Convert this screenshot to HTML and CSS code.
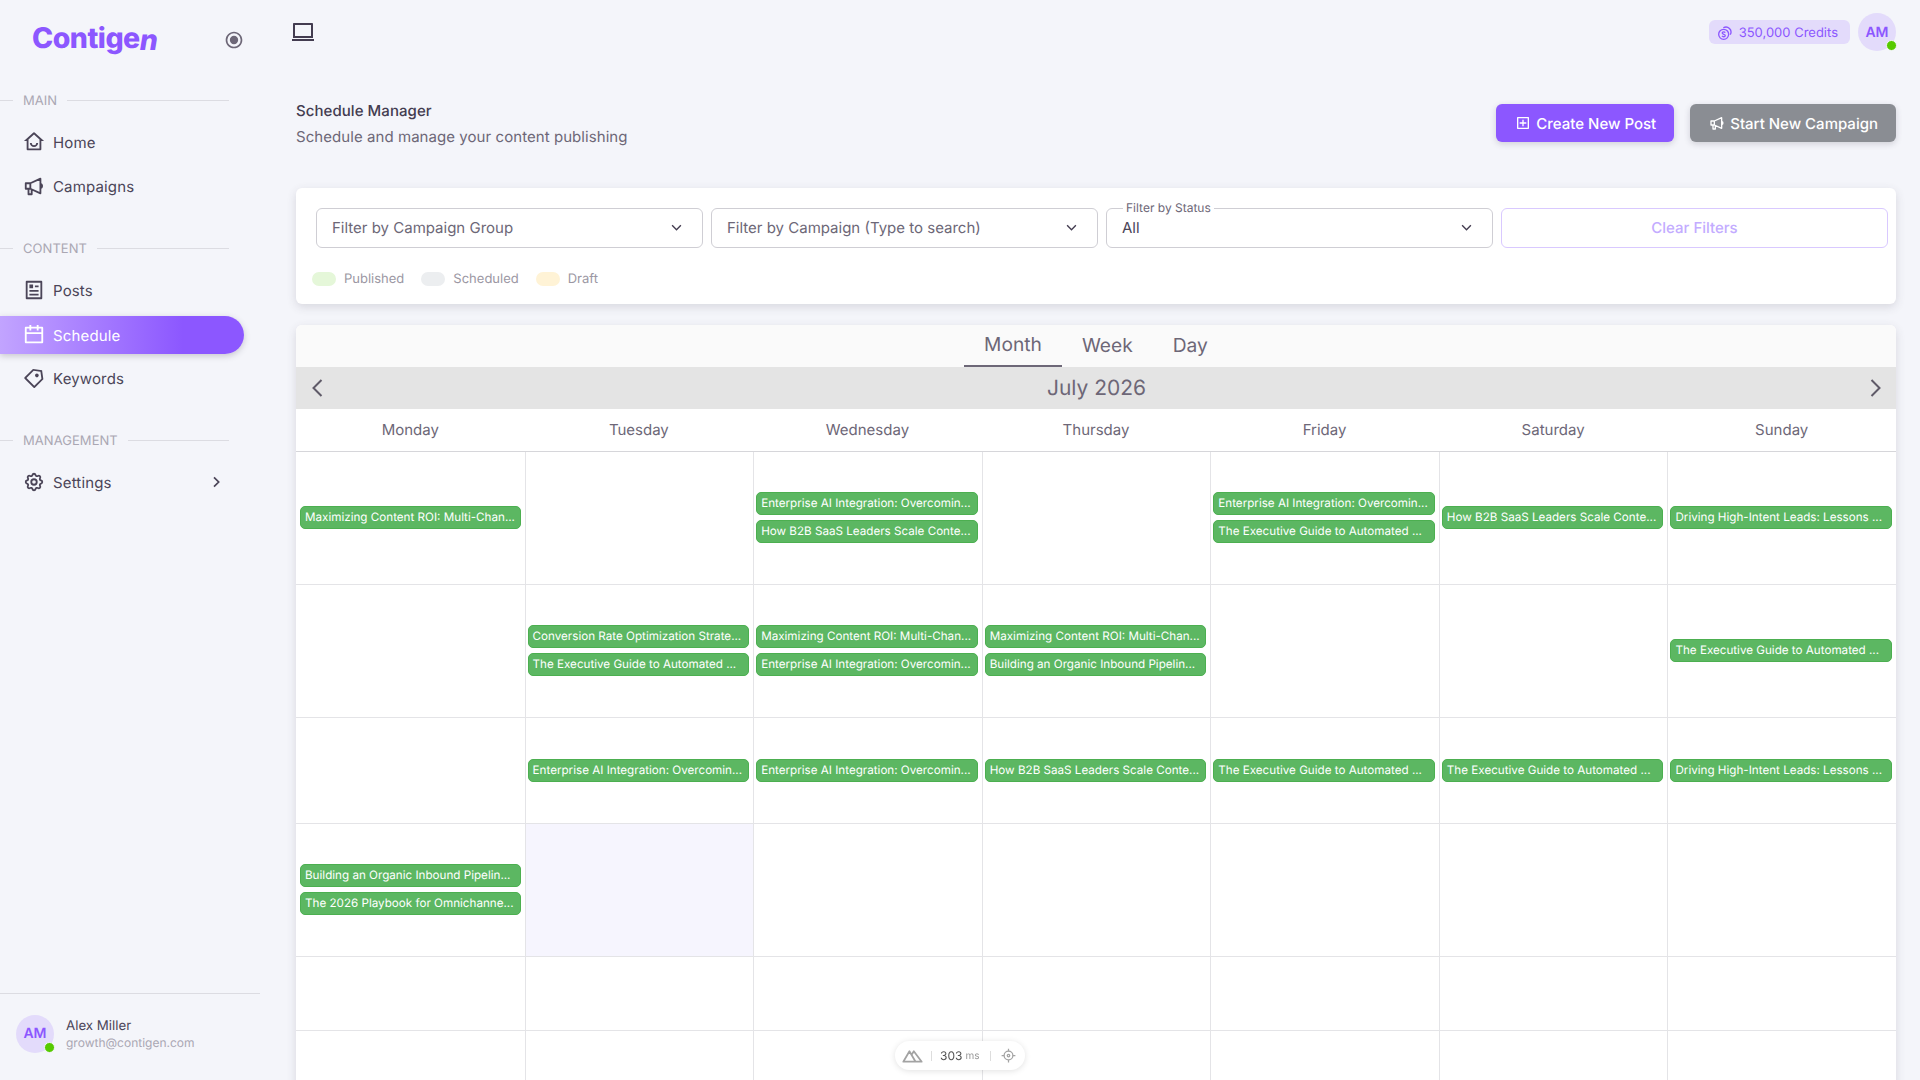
FILE: index.html
```html
<!DOCTYPE html>
<html lang="en">
<head>
  <meta charset="UTF-8">
  <meta name="viewport" content="width=device-width, initial-scale=1.0">
  <title>Schedule Manager</title>
  <link rel="stylesheet" href="styles.css">
</head>
<body>
<div class="app">
  <!-- Sidebar -->
  <aside class="sidebar">
    <div class="brand">
      <span class="logo">Contige<span class="logo-n">n</span></span>
      <svg class="pin" viewBox="0 0 24 24"><path d="M12 22C6.477 22 2 17.523 2 12S6.477 2 12 2s10 4.477 10 10-4.477 10-10 10zm0-2a8 8 0 1 0 0-16 8 8 0 0 0 0 16zm0-3a5 5 0 1 1 0-10 5 5 0 0 1 0 10z"/></svg>
    </div>

    <div class="section-label"><span>MAIN</span></div>
    <a class="nav-item">
      <svg class="nav-icon" viewBox="0 0 24 24"><path d="M6 19h12V9.157l-6-5.454-6 5.454V19zm13 2H5a1 1 0 0 1-1-1v-9H1l10.327-9.388a1 1 0 0 1 1.346 0L23 11h-3v9a1 1 0 0 1-1 1zM7.5 13h2a2.5 2.5 0 1 0 5 0h2a4.5 4.5 0 1 1-9 0z"/></svg>
      Home
    </a>
    <a class="nav-item">
      <svg class="nav-icon stroke" viewBox="0 0 24 24"><path d="M3 9h5l11-5v16L8 15H3zM8 9v6M6 15v6h3.5v-5M19 9.5a2.6 2.6 0 0 1 0 5"/></svg>
      Campaigns
    </a>

    <div class="section-label gap"><span>CONTENT</span></div>
    <a class="nav-item">
      <svg class="nav-icon" viewBox="0 0 24 24"><path d="M20 22H4a1 1 0 0 1-1-1V3a1 1 0 0 1 1-1h16a1 1 0 0 1 1 1v18a1 1 0 0 1-1 1zm-1-2V4H5v16h14zM7 6h4v4H7V6zm0 6h10v2H7v-2zm0 4h10v2H7v-2zm6-9h4v2h-4V7z"/></svg>
      Posts
    </a>
    <a class="nav-item active">
      <svg class="nav-icon" viewBox="0 0 24 24"><path d="M17 3h4a1 1 0 0 1 1 1v16a1 1 0 0 1-1 1H3a1 1 0 0 1-1-1V4a1 1 0 0 1 1-1h4V1h2v2h6V1h2v2zm-2 2H9v2H7V5H4v4h16V5h-3v2h-2V5zm5 6H4v8h16v-8z"/></svg>
      Schedule
    </a>
    <a class="nav-item">
      <svg class="nav-icon" viewBox="0 0 24 24"><path d="M10.9 2.1l9.899 1.415 1.414 9.9-9.192 9.192a1 1 0 0 1-1.414 0l-9.9-9.9a1 1 0 0 1 0-1.414L10.9 2.1zm.707 2.122L3.828 12l8.486 8.485 7.778-7.778-1.06-7.425-7.425-1.06zm2.12 6.364a2 2 0 1 1 2.83-2.829 2 2 0 0 1-2.83 2.829z"/></svg>
      Keywords
    </a>

    <div class="section-label gap"><span>MANAGEMENT</span></div>
    <a class="nav-item">
      <svg class="nav-icon stroke" viewBox="0 0 24 24"><path d="M10.325 4.317c.426 -1.756 2.924 -1.756 3.35 0a1.724 1.724 0 0 0 2.573 1.066c1.543 -.94 3.31 .826 2.37 2.37a1.724 1.724 0 0 0 1.065 2.572c1.756 .426 1.756 2.924 0 3.35a1.724 1.724 0 0 0 -1.066 2.573c.94 1.543 -.826 3.31 -2.37 2.37a1.724 1.724 0 0 0 -2.572 1.065c-.426 1.756 -2.924 1.756 -3.35 0a1.724 1.724 0 0 0 -2.573 -1.066c-1.543 .94 -3.31 -.826 -2.37 -2.37a1.724 1.724 0 0 0 -1.065 -2.572c-1.756 -.426 -1.756 -2.924 0 -3.35a1.724 1.724 0 0 0 1.066 -2.573c-.94 -1.543 .826 -3.31 2.37 -2.37c1 .608 2.296 .07 2.572 -1.065z"/><circle cx="12" cy="12" r="3"/></svg>
      Settings
      <svg class="nav-arrow" viewBox="0 0 24 24"><path d="M9 5l7 7-7 7"/></svg>
    </a>

    <div class="user-box">
      <div class="avatar">AM<span class="online"></span></div>
      <div class="user-text">
        <div class="user-name">Alex Miller</div>
        <div class="user-mail">growth@contigen.com</div>
      </div>
    </div>
  </aside>

  <!-- Main content -->
  <main class="main">
    <div class="topbar">
      <svg class="laptop" viewBox="0 0 24 24"><path d="M4 5v11h16V5H4zm-2-.993C2 3.451 2.455 3 2.992 3h18.016c.548 0 .992.449.992 1.007V18H2V4.007zM1 19h22v2H1v-2z"/></svg>
      <div class="top-right">
        <div class="credits">
          <svg class="coin" viewBox="0 0 24 24"><circle cx="10" cy="14" r="7.5"/><path d="M9.5 4.2a7.5 7.5 0 0 1 10.3 10.3M12.4 11.4c-.6-.8-1.4-1.1-2.4-1.1-1.3 0-2.2.7-2.2 1.8 0 2.4 4.6 1.3 4.6 3.7 0 1.1-1 1.8-2.4 1.8-1 0-1.9-.4-2.5-1.2"/></svg>
          350,000 Credits
        </div>
        <div class="avatar">AM<span class="online"></span></div>
      </div>
    </div>

    <div class="page-head">
      <div class="page-title">
        <h1>Schedule Manager</h1>
        <p>Schedule and manage your content publishing</p>
      </div>
      <div class="page-actions">
        <button class="btn btn-primary">
          <svg viewBox="0 0 24 24"><path d="M4 3h16a1 1 0 0 1 1 1v16a1 1 0 0 1-1 1H4a1 1 0 0 1-1-1V4a1 1 0 0 1 1-1zm1 2v14h14V5H5zm6 6V7h2v4h4v2h-4v4h-2v-4H7v-2h4z"/></svg>
          Create New Post
        </button>
        <button class="btn btn-grey">
          <svg class="stroke" viewBox="0 0 24 24"><path d="M3 9h5l11-5v16L8 15H3zM8 9v6M6 15v6h3.5v-5M19 9.5a2.6 2.6 0 0 1 0 5"/></svg>
          Start New Campaign
        </button>
      </div>
    </div>

    <section class="card filters">
      <div class="filter-row">
        <div class="field">Filter by Campaign Group<svg class="caret" viewBox="0 0 24 24"><path d="M5 8.5l7 7 7-7"/></svg></div>
        <div class="field">Filter by Campaign (Type to search)<svg class="caret" viewBox="0 0 24 24"><path d="M5 8.5l7 7 7-7"/></svg></div>
        <div class="field filled"><span class="field-label">Filter by Status</span>All<svg class="caret" viewBox="0 0 24 24"><path d="M5 8.5l7 7 7-7"/></svg></div>
        <button class="clear-btn">Clear Filters</button>
      </div>
      <div class="legend">
        <span class="chip chip-green"></span><span class="legend-text">Published</span>
        <span class="chip chip-grey"></span><span class="legend-text">Scheduled</span>
        <span class="chip chip-yellow"></span><span class="legend-text">Draft</span>
      </div>
    </section>

    <section class="card calendar">
      <div class="tabs">
        <span class="tab active">Month</span>
        <span class="tab">Week</span>
        <span class="tab">Day</span>
      </div>
      <div class="cal-nav">
        <svg viewBox="0 0 24 24"><path d="M15.5 4l-8 8 8 8"/></svg>
        <span>July 2026</span>
        <svg viewBox="0 0 24 24"><path d="M8.5 4l8 8-8 8"/></svg>
      </div>
      <div class="cal-days">
        <div>Monday</div><div>Tuesday</div><div>Wednesday</div><div>Thursday</div><div>Friday</div><div>Saturday</div><div>Sunday</div>
      </div>
      <div class="cal-grid">
        <!-- Week 1 -->
        <div class="cell"><div class="event">Maximizing Content ROI: Multi-Chan...</div></div>
        <div class="cell"></div>
        <div class="cell"><div class="event">Enterprise AI Integration: Overcomin...</div><div class="event">How B2B SaaS Leaders Scale Conte...</div></div>
        <div class="cell"></div>
        <div class="cell"><div class="event">Enterprise AI Integration: Overcomin...</div><div class="event">The Executive Guide to Automated ...</div></div>
        <div class="cell"><div class="event">How B2B SaaS Leaders Scale Conte...</div></div>
        <div class="cell"><div class="event">Driving High-Intent Leads: Lessons ...</div></div>
        <!-- Week 2 -->
        <div class="cell"></div>
        <div class="cell"><div class="event">Conversion Rate Optimization Strate...</div><div class="event">The Executive Guide to Automated ...</div></div>
        <div class="cell"><div class="event">Maximizing Content ROI: Multi-Chan...</div><div class="event">Enterprise AI Integration: Overcomin...</div></div>
        <div class="cell"><div class="event">Maximizing Content ROI: Multi-Chan...</div><div class="event">Building an Organic Inbound Pipelin...</div></div>
        <div class="cell"></div>
        <div class="cell"></div>
        <div class="cell"><div class="event">The Executive Guide to Automated ...</div></div>
        <!-- Week 3 -->
        <div class="cell"></div>
        <div class="cell"><div class="event">Enterprise AI Integration: Overcomin...</div></div>
        <div class="cell"><div class="event">Enterprise AI Integration: Overcomin...</div></div>
        <div class="cell"><div class="event">How B2B SaaS Leaders Scale Conte...</div></div>
        <div class="cell"><div class="event">The Executive Guide to Automated ...</div></div>
        <div class="cell"><div class="event">The Executive Guide to Automated ...</div></div>
        <div class="cell"><div class="event">Driving High-Intent Leads: Lessons ...</div></div>
        <!-- Week 4 -->
        <div class="cell"><div class="event">Building an Organic Inbound Pipelin...</div><div class="event">The 2026 Playbook for Omnichanne...</div></div>
        <div class="cell today"></div>
        <div class="cell"></div>
        <div class="cell"></div>
        <div class="cell"></div>
        <div class="cell"></div>
        <div class="cell"></div>
        <!-- Week 5 -->
        <div class="cell"></div><div class="cell"></div><div class="cell"></div><div class="cell"></div><div class="cell"></div><div class="cell"></div><div class="cell"></div>
        <!-- Week 6 -->
        <div class="cell"></div><div class="cell"></div><div class="cell"></div><div class="cell"></div><div class="cell"></div><div class="cell"></div><div class="cell"></div>
      </div>
    </section>
  </main>
</div>

<!-- Dev timing pill -->
<div class="dev-pill">
  <svg class="dev-logo" viewBox="0 0 24 16"><path d="M1.5 14.5L8.5 2.5l7 12zM11 6.5l2.5-4 9 12h-7"/></svg>
  <span class="dev-sep"></span>
  <span class="dev-num">303</span><span class="dev-unit">ms</span>
  <span class="dev-sep"></span>
  <svg class="dev-target" viewBox="0 0 24 24"><circle cx="12" cy="12" r="7"/><circle cx="12" cy="12" r="2"/><path d="M12 1v4M12 19v4M1 12h4M19 12h4"/></svg>
</div>
</body>
</html>
```

FILE: styles.css
```css
/* General Styles */
* {
  box-sizing: border-box;
}
html, body {
  margin: 0;
  padding: 0;
  height: 100%;
  overflow: hidden;
}
body {
  font-family: 'Inter', sans-serif;
  font-size: 15px;
  background: #f4f5fa;
  color: #433c50;
  text-rendering: geometricPrecision;
}
.app {
  display: flex;
  height: 100vh;
}

/* Sidebar */
.sidebar {
  width: 260px;
  flex-shrink: 0;
  display: flex;
  flex-direction: column;
  height: 100%;
}
.brand {
  display: flex;
  align-items: center;
  justify-content: space-between;
  height: 77px;
  padding: 2px 16px 0 32px;
}
.logo {
  margin-bottom: 4px;
  font-family: 'Inter', sans-serif;
  font-weight: 800;
  font-size: 28.5px;
  letter-spacing: -0.5px;
  color: #8c57ff;
}
.logo-n {
  display: inline-block;
  font-style: italic;
  transform: translateY(2px);
}
.pin {
  width: 20px;
  height: 20px;
  fill: #6d6777;
}
.section-label {
  display: flex;
  align-items: center;
  gap: 10px;
  height: 46px;
  margin-right: 31px;
  font-size: 13px;
  letter-spacing: .05px;
  color: #aaa7b3;
}
.section-label span {
  margin-top: 1px;
}
.section-label::before {
  content: "";
  width: 13px;
  height: 1px;
  background: #dcdce2;
}
.section-label::after {
  content: "";
  flex: 1;
  height: 1px;
  background: #dcdce2;
}
.section-label.gap {
  margin-top: 14px;
}
.nav-item {
  display: flex;
  align-items: center;
  gap: 8px;
  width: 244px;
  height: 38px;
  margin-bottom: 6px;
  padding-left: 23px;
  padding-right: 18px;
  border-radius: 0 19px 19px 0;
  color: #4b4558;
  letter-spacing: .15px;
}
.nav-item.active {
  margin-top: 1px;
  margin-bottom: 5px;
  background: linear-gradient(270deg, #8c57ff 25%, #c2a4ff 100%);
  color: #fff;
  box-shadow: 0 2px 6px rgba(67, 60, 80, .25);
}
.nav-icon {
  width: 22px;
  height: 22px;
  fill: currentColor;
  flex-shrink: 0;
}
.nav-icon.stroke,
.btn svg.stroke {
  fill: none;
  stroke: currentColor;
  stroke-width: 2;
  stroke-linejoin: round;
}
.nav-arrow {
  width: 16px;
  height: 16px;
  margin-left: auto;
  margin-right: 2px;
  fill: none;
  stroke: currentColor;
  stroke-width: 2.6;
}
.user-box {
  margin-top: auto;
  height: 87px;
  display: flex;
  align-items: center;
  gap: 12px;
  padding: 0 16px 7px;
  border-top: 1px solid #dcdce2;
}
.avatar {
  position: relative;
  width: 38px;
  height: 38px;
  border-radius: 50%;
  background: #e3dbfb;
  color: #8c57ff;
  font-size: 14px;
  font-weight: 600;
  display: flex;
  align-items: center;
  justify-content: center;
  flex-shrink: 0;
}
.online {
  position: absolute;
  right: -1px;
  bottom: 0;
  width: 11px;
  height: 11px;
  border-radius: 50%;
  background: #56ca00;
  border: 1.5px solid #f4f5fa;
}
.user-name {
  font-size: 13.3px;
  line-height: 18px;
  color: #4b4558;
}
.user-mail {
  font-size: 12px;
  line-height: 16px;
  color: #aaa7b3;
}

/* Main */
.main {
  flex: 1;
  min-width: 0;
  padding: 0 24px 0 36px;
}
.topbar {
  display: flex;
  justify-content: space-between;
  align-items: flex-start;
  height: 97px;
  padding-top: 13px;
}
.laptop {
  width: 24px;
  height: 24px;
  margin: 7px 0 0 -5px;
  fill: #433c50;
}
.top-right {
  display: flex;
  align-items: center;
  gap: 8px;
}
.credits {
  display: flex;
  align-items: center;
  gap: 6px;
  height: 24px;
  padding: 1px 12px 0 8px;
  border-radius: 6px;
  background: #e3dbfb;
  color: #8c57ff;
  font-size: 13px;
}
.coin {
  width: 16px;
  height: 16px;
  fill: none;
  stroke: #8c57ff;
  stroke-width: 2;
}
.page-head {
  display: flex;
  justify-content: space-between;
  align-items: center;
  height: 52px;
  margin-bottom: 39px;
}
.page-title {
  margin-top: 2px;
  letter-spacing: .06px;
}
.page-head h1 {
  margin: 0 0 8px;
  font-size: 15px;
  line-height: 18px;
  font-weight: 500;
  color: #433c50;
}
.page-head p {
  margin: 0;
  line-height: 18px;
  color: #6d6777;
}
.page-actions {
  display: flex;
  gap: 16px;
}
.btn {
  display: flex;
  align-items: center;
  gap: 5px;
  height: 38px;
  padding: 0 18px 0 19px;
  border: none;
  border-radius: 6px;
  font-family: inherit;
  font-size: 15px;
  font-weight: 500;
  color: #fff;
  text-rendering: geometricPrecision;
  box-shadow: 0 2px 6px rgba(67, 60, 80, .2);
}
.btn svg {
  width: 16px;
  height: 16px;
  fill: currentColor;
}
.btn-primary {
  background: #8c57ff;
}
.btn-grey {
  background: #8a8d93;
}
.card {
  background: #fff;
  border-radius: 6px;
  box-shadow: 0 3px 10px rgba(67, 60, 80, .16);
}

/* Filters */
.filters {
  height: 116px;
  padding: 20px 8px 0 20px;
  margin-bottom: 21px;
}
.filter-row {
  display: grid;
  grid-template-columns: repeat(4, 1fr);
  gap: 8px;
}
.field {
  position: relative;
  display: flex;
  align-items: center;
  height: 40px;
  padding: 0 16px 2px 15px;
  border: 1px solid #cfced4;
  border-radius: 6px;
  color: #6d6777;
}
.field.filled {
  color: #4b4558;
}
.field-label {
  position: absolute;
  top: -8px;
  left: 16px;
  padding: 0 3px;
  background: #fff;
  font-size: 12px;
  line-height: 14px;
  color: #6d6777;
}
.caret {
  width: 15px;
  height: 15px;
  margin-left: auto;
  margin-right: 2px;
  fill: none;
  stroke: #433c50;
  stroke-width: 2.2;
}
.clear-btn {
  height: 40px;
  padding-bottom: 2px;
  border: 1px solid #d9c9ff;
  border-radius: 6px;
  background: #fff;
  color: #c3acff;
  font-family: inherit;
  font-size: 15px;
  font-weight: 500;
  text-rendering: geometricPrecision;
}
.legend {
  display: flex;
  align-items: center;
  height: 16px;
  margin: 23px 0 0 -4px;
  font-size: 13px;
  color: #9b97a3;
}
.chip {
  width: 24px;
  height: 14px;
  margin-top: -1px;
  border-radius: 7px;
  margin-right: 8px;
}
.chip-green {
  background: #e5f7d9;
}
.chip-grey {
  background: #eceef0;
}
.chip-yellow {
  background: #fff3d6;
}
.legend-text {
  margin-right: 17px;
}

/* Calendar */
.calendar {
  overflow: hidden;
  margin-bottom: 40px;
}
.tabs {
  display: flex;
  justify-content: center;
  height: 42px;
  background: #fafafa;
}
.tab {
  padding: 0 20px;
  font-size: 19.2px;
  line-height: 41px;
  color: #6d6777;
}
.tab.active {
  border-bottom: 2px solid #6d6777;
  line-height: 39px;
}
.cal-nav {
  display: flex;
  align-items: center;
  justify-content: space-between;
  height: 42px;
  padding: 0 9px 0 10px;
  background: #e4e4e4;
  font-size: 21px;
  color: #6d6777;
}
.cal-nav svg {
  width: 24px;
  height: 24px;
  fill: none;
  stroke: #5f5a68;
  stroke-width: 2;
}
.cal-days {
  display: grid;
  grid-template-columns: repeat(7, 1fr);
  height: 43px;
  border-bottom: 1px solid #d6d6da;
  text-align: center;
  line-height: 42px;
  color: #6d6777;
}
.cal-grid {
  display: grid;
  grid-template-columns: repeat(7, 1fr);
  grid-template-rows: 133px 133px 106px 133px 74px 133px;
}
.cell {
  display: flex;
  flex-direction: column;
  justify-content: center;
  gap: 5px;
  padding: 0 4px 1px 2px;
  border-left: 1px solid #e4e4e7;
  border-bottom: 1px solid #e4e4e7;
  min-width: 0;
}
.cell:nth-child(7n+1) {
  border-left: none;
  padding-left: 4px;
}
.cell.today {
  background: #f6f5fe;
}
.event {
  flex-shrink: 0;
  height: 23px;
  padding: 0 4px;
  border: 1px solid #4caf50;
  border-radius: 5px;
  background: #5cb762;
  color: #fff;
  font-size: 11.65px;
  line-height: 21px;
  white-space: nowrap;
  overflow: hidden;
}

/* Dev pill */
.dev-pill {
  position: fixed;
  left: 895px;
  bottom: 10px;
  width: 130px;
  height: 29px;
  display: flex;
  align-items: center;
  gap: 6px;
  padding-left: 7px;
  border-radius: 15px;
  background: #fff;
  box-shadow: 0 1px 6px rgba(0, 0, 0, .12);
  font-family: 'Inter', sans-serif;
  font-size: 12px;
  color: #555;
}
.dev-logo {
  width: 21px;
  height: 14px;
  fill: none;
  stroke: #a3a3a3;
  stroke-width: 2;
  stroke-linejoin: round;
}
.dev-sep {
  width: 1px;
  height: 10px;
  margin: 0 2px;
  background: #ddd;
}
.dev-unit {
  margin: 0 3px 0 -3px;
  font-size: 10px;
  color: #999;
}
.dev-target {
  width: 15px;
  height: 15px;
  margin-left: 2px;
  fill: none;
  stroke: #a3a3a3;
  stroke-width: 2;
}
```
